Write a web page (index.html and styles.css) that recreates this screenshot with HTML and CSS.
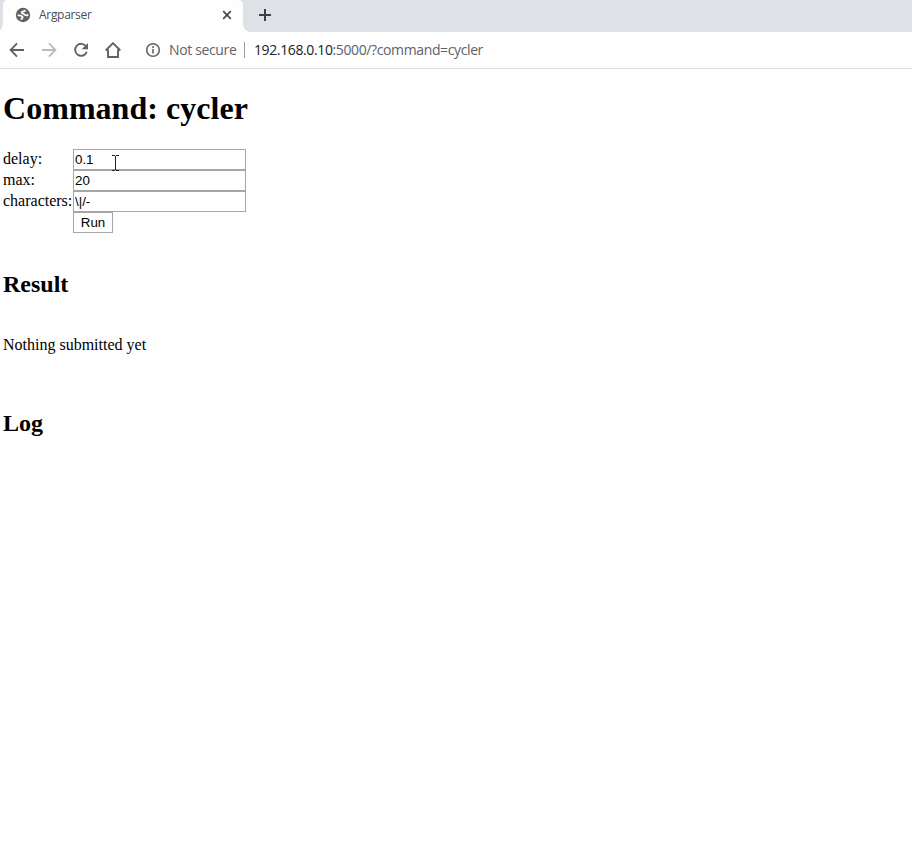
FILE: index.html
```html
<!DOCTYPE html>
<html lang="en">
<head>
<meta charset="utf-8">
<title>Argparser</title>
<link rel="stylesheet" href="styles.css">
</head>
<body>
<header class="browser">
  <div class="tabs">
    <div class="tab">
      <svg class="globe" width="16" height="16" viewBox="0 0 16 16"><circle cx="8" cy="8" r="7.200"/><path d="M10.500 3.200C9.500 4.700 7.400 3.900 6.600 5.200C6.500 6.800 8.800 6.300 9.800 7.700C10.500 8.700 12 8.200 13.400 8.200M2.600 8.300C4.800 8.200 7.300 8.500 7.600 10.200C7.500 11.700 6.500 11.500 6 12.600"/></svg>
      <span class="tab-title">Argparser</span>
      <svg class="close" width="10" height="10" viewBox="0 0 10 10"><path d="M1.200 1.200l7.600 7.600M8.800 1.200l-7.600 7.600"/></svg>
    </div>
    <div class="new-tab">
      <svg width="12" height="12" viewBox="0 0 12 12"><path d="M6 0v12M0 6h12"/></svg>
    </div>
  </div>
  <nav class="toolbar">
    <svg class="tool" viewBox="0 0 16 16"><path d="M15 8H2M8 1.300L1.600 8L8 14.700"/></svg>
    <svg class="tool off" viewBox="0 0 16 16"><path d="M1 8h13M8 1.300L14.400 8L8 14.700"/></svg>
    <svg class="tool" viewBox="0 0 16 16"><path d="M13.200 4.600A6 6 0 1 0 13.800 9.800"/><path class="solid" d="M15 1v6.300H8.700z"/></svg>
    <svg class="tool" viewBox="0 0 16 16"><path d="M.700 8.500L8 1.200L15.300 8.500M3 7.500V15H13V7.500"/></svg>
    <div class="address">
      <svg class="info" width="16" height="16" viewBox="0 0 16 16"><circle cx="8" cy="8" r="6.300"/><path d="M8 7v4.500M8 4.300v1.700"/></svg>
      <span class="security">Not secure</span>
      <span class="divider"></span>
      <span class="url"><span class="host">192.168.0.10</span>:5000/?command=cycler</span>
    </div>
  </nav>
</header>
<main class="page">
  <h1>Command: cycler</h1>
  <form class="fields">
    <label for="delay">delay:</label><input id="delay" type="text" value="0.1">
    <label for="max">max:</label><input id="max" type="text" value="20">
    <label for="characters">characters:</label><input id="characters" type="text" value="\|/-">
    <button type="button">Run</button>
  </form>
  <h2 class="result-title">Result</h2>
  <p>Nothing submitted yet</p>
  <h2 class="log-title">Log</h2>
</main>
<svg class="cursor" width="7" height="16" viewBox="0 0 7 16"><path d="M0 .500h3M4 .500h3M3.500 1v14M0 15.500h3M4 15.500h3"/></svg>
</body>
</html>
```
FILE: styles.css
```css
* { box-sizing: border-box; }
body {
  margin: 0;
  height: 864px;
  overflow: hidden;
  background: #fefefe;
  color: #000;
  font: 16px/19px "Liberation Serif", serif;
}
svg { display: block; flex: none; }
.browser { font-family: "Open Sans", "Noto Sans", sans-serif; color: #5f6368; }
.tabs { display: flex; height: 32px; padding-left: 3px; background: linear-gradient(#fefefe, #fefefe) 0 100% / 248px 8px no-repeat #dee1e6; }
.tab {
  display: flex;
  align-items: center;
  width: 240px;
  height: 32px;
  padding: 0 11px 2px 12px;
  background: #fefefe;
  border-radius: 5px 5px 0 0;
  position: relative;
}
.tab::before {
  content: "";
  position: absolute;
  left: -3px;
  top: 20px;
  width: 3px;
  height: 10px;
  background: #dee1e6;
  border-radius: 0 0 3px 0 / 0 0 10px 0;
}
.globe { fill: #5f6368; }
.globe path { fill: none; stroke: #fefefe; stroke-width: 1.8; }
.tab-title { flex: 1; margin-left: 8px; font-size: 12px; line-height: 16px; letter-spacing: -0.3px; color: #4b4f54; }
.close { stroke: #45494d; stroke-width: 1.7; }
.new-tab { flex: 1; padding: 9px 0 0 16px; background: #dee1e6; border-bottom-left-radius: 8px; }
.new-tab path { stroke: #3c4043; stroke-width: 2; }
.toolbar {
  display: flex;
  align-items: center;
  gap: 16px;
  height: 37px;
  padding: 0 9px;
  border-bottom: 1px solid #dadce0;
}
.tool { width: 16px; height: 16px; fill: none; stroke: #5f6368; stroke-width: 1.9; }
.off { stroke: #babcbe; }
.tool .solid { fill: #5f6368; stroke: none; }
.address { display: flex; align-items: center; margin-left: 8px; font-size: 14px; line-height: 18px; white-space: nowrap; }
.info { fill: none; stroke: #5f6368; stroke-width: 1.6; }
.security { width: 75px; margin-left: 8px; letter-spacing: -0.36px; padding-bottom: 1px; }
.divider { width: 1px; height: 16px; background: #9aa0a6; }
.url { margin-left: 9px; letter-spacing: -0.38px; padding-bottom: 1px; }
.host { color: #202124; }
.page { padding: 0 3px; }
h1 { margin: 21px 0 22px; font-size: 32px; line-height: 37px; letter-spacing: 0.04px; }
h2 { margin: 0; font-size: 24px; line-height: 28px; }
.fields { display: grid; grid-template-columns: 70px 173px; grid-auto-rows: 21px; }
.fields label { line-height: 20px; white-space: nowrap; }
.fields input, .fields button {
  height: 21px;
  border: 1px solid #a6a6a6;
  background: #fefefe;
  color: #000;
  border-radius: 0;
  font: 13.333px "Liberation Sans", sans-serif;
}
.fields input { width: 173px; padding: 0 1px; }
.fields button { grid-column: 2; width: 40px; padding: 0 0 1px; }
.result-title { margin-top: 37px; }
p { margin: 37px 0 0; }
.log-title { margin-top: 55px; }
.cursor { position: absolute; left: 112px; top: 155px; fill: none; stroke: #222; stroke-width: 1; }
```
